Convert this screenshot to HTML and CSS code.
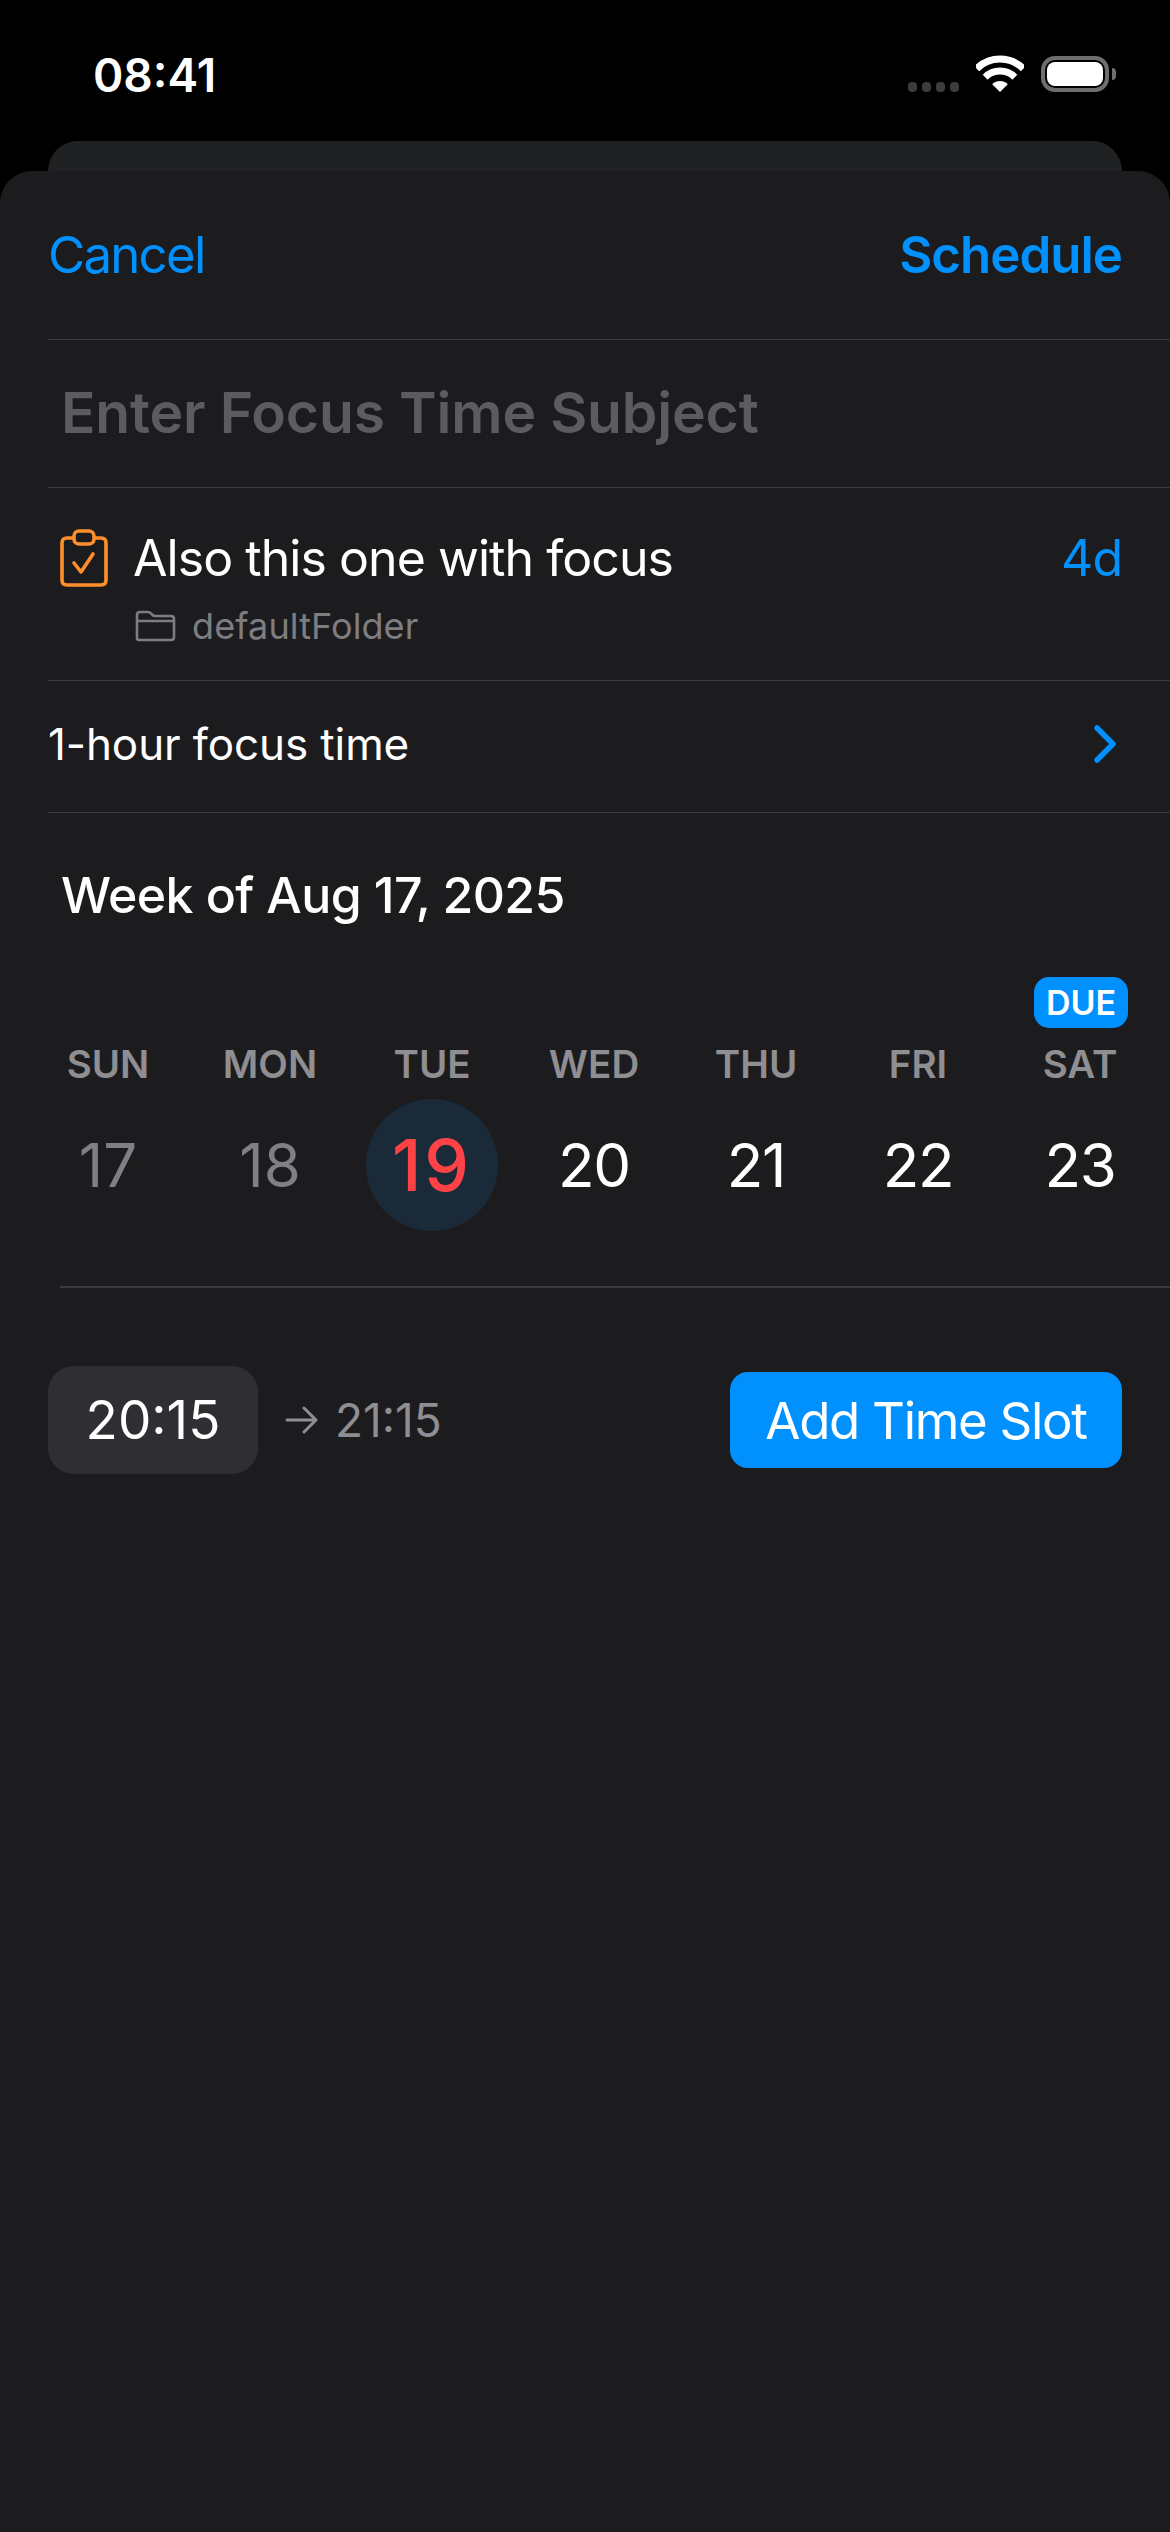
FILE: index.html
```html
<!DOCTYPE html>
<html lang="en">
<head>
    <meta charset="UTF-8">
    <meta name="viewport" content="width=device-width, initial-scale=1.0">
    <title>Schedule Focus Time</title>
    <link rel="stylesheet" href="styles.css">
</head>
<body>
    <!-- Status bar -->
    <div class="status-bar">
        <span class="status-time">08:41</span>
        <div class="status-icons">
            <div class="signal-dots"><i></i><i></i><i></i><i></i></div>
            <svg class="wifi-icon" width="48" height="37" viewBox="0 0 48 37">
                <path d="M0.7 13.7A33 33 0 0 1 47.3 13.7" fill="none" stroke="#fff" stroke-width="7"/>
                <path d="M9.2 22.2A21 21 0 0 1 38.8 22.2" fill="none" stroke="#fff" stroke-width="7"/>
                <path d="M24 37L16.2 29.2A11 11 0 0 1 31.8 29.2Z" fill="#fff"/>
            </svg>
            <div class="battery"><div class="battery-fill"></div></div>
            <div class="battery-nub"></div>
        </div>
    </div>

    <div class="back-card"></div>

    <div class="sheet">
        <!-- Nav -->
        <div class="row nav-row">
            <span class="nav-cancel">Cancel</span>
            <span class="nav-schedule">Schedule</span>
        </div>

        <div class="row subject-row">
            <span class="subject-placeholder">Enter Focus Time Subject</span>
        </div>

        <!-- Task -->
        <div class="row task-row">
            <svg class="task-icon" width="50" height="58" viewBox="0 0 50 58" fill="none" stroke="#ff8f2b" stroke-width="3.6" stroke-linecap="round" stroke-linejoin="round">
                <path d="M14 9H8Q3 9 3 14V51Q3 56 8 56H42Q47 56 47 51V14Q47 9 42 9H36"/>
                <rect x="15" y="2" width="20" height="13" rx="5"/>
                <path d="M15 34L22 43L34 25"/>
            </svg>
            <div class="task-text">
                <div class="task-title">Also this one with focus</div>
                <div class="task-folder">
                    <svg width="41" height="32" viewBox="0 0 41 32" fill="none" stroke="#7e7e82" stroke-width="2.6" stroke-linejoin="round">
                        <path d="M2 28V5Q2 2 5 2H13Q15 2 17 4.500Q18.500 6 20 6H36Q39 6 39 9V27Q39 30 36 30H4Q2 30 2 28Z"/>
                        <path d="M2 11H39"/>
                    </svg>
                    <span>defaultFolder</span>
                </div>
            </div>
            <span class="task-days">4d</span>
        </div>

        <div class="row duration-row">
            <span>1-hour focus time</span>
            <svg width="24" height="38" viewBox="0 0 24 38" fill="none" stroke="#0091ff" stroke-width="5.500" stroke-linecap="round" stroke-linejoin="round">
                <path d="M4 3L20 19L4 35"/>
            </svg>
        </div>

        <!-- Calendar -->
        <div class="week-title">Week of Aug 17, 2025</div>
        <div class="week-grid">
            <div class="day past"><span class="day-name">SUN</span><span class="day-num">17</span></div>
            <div class="day past"><span class="day-name">MON</span><span class="day-num">18</span></div>
            <div class="day today"><span class="day-name">TUE</span><span class="day-num">19</span></div>
            <div class="day"><span class="day-name">WED</span><span class="day-num">20</span></div>
            <div class="day"><span class="day-name">THU</span><span class="day-num">21</span></div>
            <div class="day"><span class="day-name">FRI</span><span class="day-num">22</span></div>
            <div class="day"><span class="due-badge">DUE</span><span class="day-name">SAT</span><span class="day-num">23</span></div>
        </div>

        <!-- Time slot -->
        <div class="slot-row">
            <div class="slot-start">20:15</div>
            <svg class="slot-arrow" width="34" height="28" viewBox="0 0 34 28" fill="none" stroke="#8e8e93" stroke-width="3" stroke-linecap="round" stroke-linejoin="round">
                <path d="M2 14H31M19 2L31 14L19 26"/>
            </svg>
            <span class="slot-end">21:15</span>
            <button class="slot-add" type="button">Add Time Slot</button>
        </div>
    </div>
</body>
</html>
```

FILE: styles.css
```css
html, body {
    height: 100%;
}

body {
    margin: 0;
    background-color: #000000;
    color: #ffffff;
    font-family: Inter, "Liberation Sans", sans-serif;
    display: flex;
    flex-direction: column;
    overflow: hidden;
}

/* Status bar */
.status-bar {
    height: 141px;
    flex: none;
    box-sizing: border-box;
    padding: 50px 54px 0 93px;
    display: flex;
    justify-content: space-between;
    align-items: flex-start;
}

.status-time {
    font-size: 46px;
    font-weight: 600;
    line-height: 50px;
}

.status-icons {
    display: flex;
    align-items: flex-start;
    padding-top: 5px;
}

.signal-dots {
    display: flex;
    gap: 5px;
    margin-top: 27px;
    margin-right: 17px;
}

.signal-dots i {
    width: 9px;
    height: 10px;
    border-radius: 4px;
    background-color: #3c3c3e;
}

.battery {
    width: 68px;
    height: 36px;
    margin-left: 17px;
    margin-top: 1px;
    box-sizing: border-box;
    border: 4px solid #6e6e70;
    border-radius: 14px;
    padding: 2px;
}

.battery-fill {
    height: 100%;
    background-color: #ffffff;
    border-radius: 8px;
}

.battery-nub {
    width: 4px;
    height: 12px;
    margin: 13px 0 0 3px;
    background-color: #6e6e70;
    border-radius: 0 4px 4px 0;
}

.back-card {
    height: 30px;
    flex: none;
    margin: 0 48px;
    background-color: #202123;
    border-radius: 30px 30px 0 0;
}

/* Sheet */
.sheet {
    flex: 1;
    background-color: #1c1c1e;
    border-radius: 32px 32px 0 0;
    padding-left: 48px;
}

.row {
    display: flex;
    align-items: center;
    justify-content: space-between;
    box-sizing: border-box;
    border-bottom: 1px solid #3a3a3c;
    padding-right: 48px;
}

.nav-row {
    height: 169px;
    font-size: 51px;
    color: #0091ff;
    padding-bottom: 1px;
}

.nav-cancel {
    letter-spacing: -1.8px;
}

.nav-schedule {
    font-weight: 600;
    letter-spacing: -1px;
}

.subject-row {
    height: 148px;
    padding-left: 13px;
    padding-bottom: 2px;
}

.subject-placeholder {
    font-size: 57px;
    font-weight: 600;
    letter-spacing: -0.15px;
    color: #5b5b60;
}

.task-row {
    height: 193px;
    align-items: flex-start;
    padding-left: 11px;
}

.task-icon {
    margin-top: 41px;
    margin-right: 24px;
    flex: none;
}

.task-text {
    flex: 1;
    padding-top: 40px;
}

.task-title {
    font-size: 50px;
    line-height: 60px;
    letter-spacing: -0.95px;
}

.task-folder {
    display: flex;
    align-items: center;
    gap: 16px;
    margin-top: 16px;
    margin-left: 2px;
    font-size: 36px;
    line-height: 44px;
    color: #7e7e82;
    letter-spacing: 0.1px;
}

.task-days {
    font-size: 50px;
    line-height: 60px;
    margin-top: 40px;
    letter-spacing: -1px;
    color: #0091ff;
}

.duration-row {
    height: 132px;
    font-size: 44px;
    letter-spacing: -0.1px;
    padding-right: 53px;
    padding-bottom: 6px;
}

.week-title {
    font-size: 50px;
    font-weight: 500;
    line-height: 60px;
    letter-spacing: -0.6px;
    padding: 52px 0 0 13px;
}

/* Week grid */
.week-grid {
    display: grid;
    grid-template-columns: repeat(7, 162px);
    margin: 0 0 0 -21px;
    padding-top: 75px;
    height: 286px;
}

.day {
    position: relative;
    display: flex;
    flex-direction: column;
    align-items: center;
    padding-top: 41px;
}

.day-name {
    font-size: 38.5px;
    font-weight: 600;
    line-height: 46px;
    color: #8e8e93;
}

.day-num {
    width: 132px;
    height: 132px;
    margin-top: 12px;
    border-radius: 50%;
    display: flex;
    align-items: center;
    justify-content: center;
    font-size: 60px;
    letter-spacing: -1.3px;
}

.past .day-num {
    color: #808084;
    letter-spacing: 0;
}

.today .day-num {
    background-color: #1b2a39;
    color: #ff4245;
    font-size: 71px;
    font-weight: 500;
    letter-spacing: 3px;
}

.due-badge {
    position: absolute;
    top: -23px;
    left: 35px;
    width: 94px;
    height: 51px;
    border-radius: 15px;
    background-color: #0091ff;
    font-size: 34px;
    font-weight: 600;
    line-height: 51px;
    text-align: center;
}

/* Time slot */
.slot-row {
    display: flex;
    align-items: center;
    padding: 80px 48px 0 0;
    position: relative;
}

.slot-row::before {
    content: "";
    position: absolute;
    top: 0;
    left: 12px;
    right: 0;
    height: 2px;
    background-color: #3a3a3c;
}

.slot-start {
    width: 210px;
    height: 108px;
    border-radius: 26px;
    background-color: #2f2f33;
    display: flex;
    align-items: center;
    justify-content: center;
    font-size: 53px;
}

.slot-arrow {
    margin-left: 27px;
}

.slot-end {
    margin-left: 16px;
    font-size: 46px;
    color: #8e8e93;
}

.slot-add {
    margin-left: auto;
    width: 392px;
    height: 96px;
    border: none;
    border-radius: 18px;
    background-color: #0091ff;
    color: #ffffff;
    font-family: inherit;
    font-size: 51px;
    letter-spacing: -1.3px;
}
```
